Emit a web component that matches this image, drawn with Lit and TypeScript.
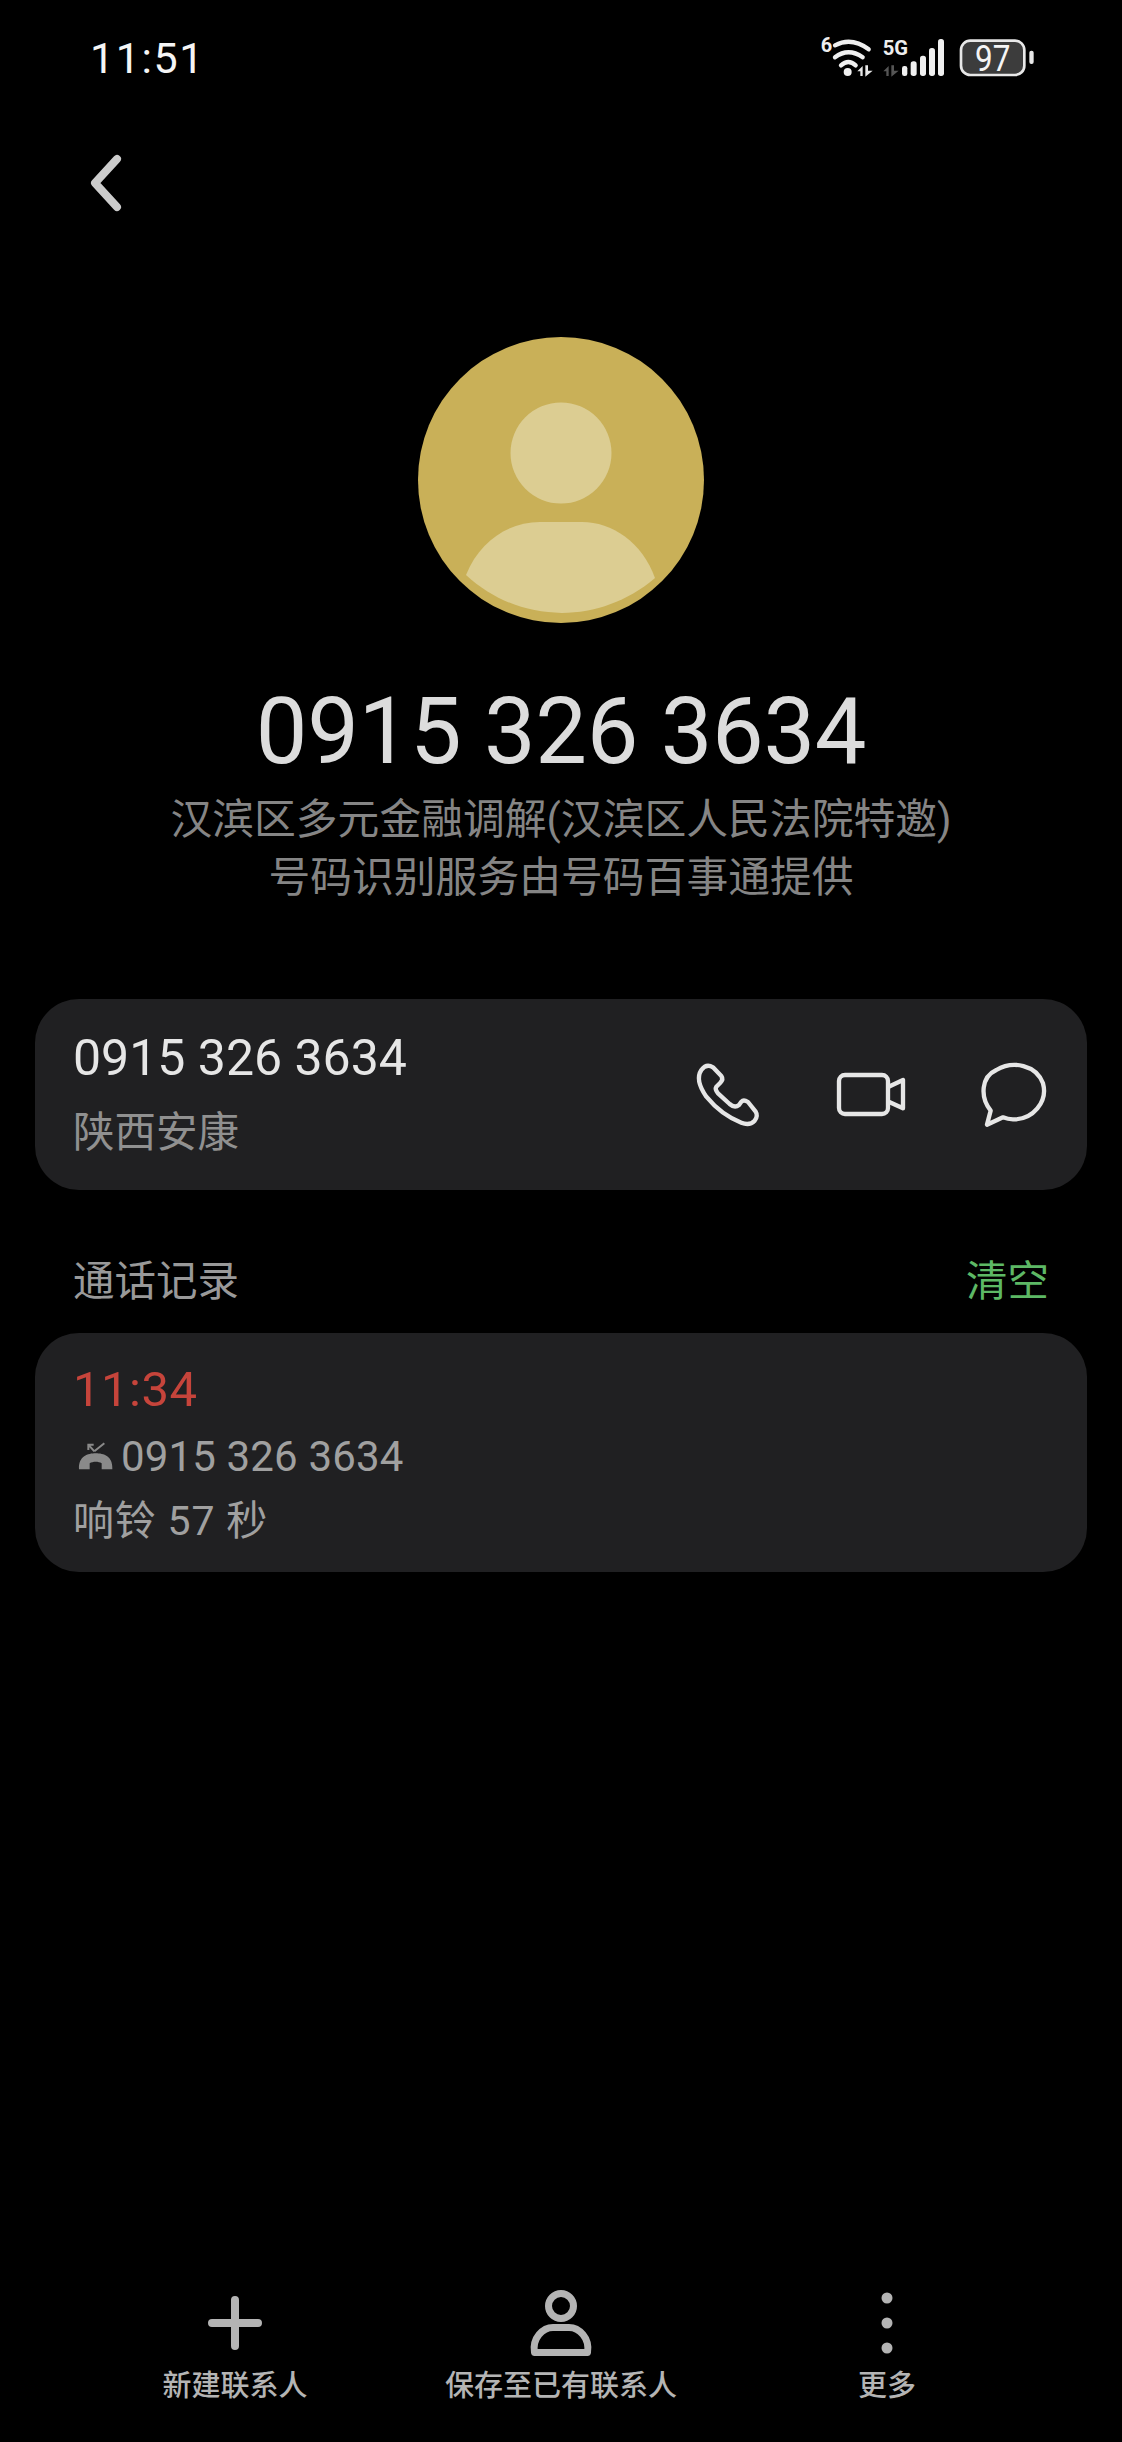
import {LitElement, html, css} from 'lit';
import {customElement} from 'lit/decorators.js';

const phoneIcon = html`<svg class="act" viewBox="85 45 240 240"><path d="M125 90Q140 70 160 82L185 108Q192 118 182 128L170 140Q165 148 175 160L210 192Q225 205 238 195L245 185Q252 178 265 186L288 215Q296 228 285 242Q270 258 245 248Q185 225 140 170Q105 120 125 90Z"/></svg>`;
const videoIcon = html`<svg class="act" viewBox="517 45 240 240"><rect x="541" y="105" width="147" height="117" rx="18"/><path d="M690 140L733 120V205L690 185"/></svg>`;
const chatIcon = html`<svg class="act" viewBox="943 45 240 240"><path d="M993 212C960 170 965 110 1010 90C1060 60 1130 75 1150 130C1165 185 1120 240 1060 238Q1045 238 1030 232L982 254Z"/></svg>`;

@customElement('app-root')
export class AppRoot extends LitElement {
  static override styles = css`
    * {
      box-sizing: border-box;
      margin: 0;
      padding: 0;
    }

    :host {
      display: block;
      width: 1122px;
      font-family: Roboto, "Noto Sans CJK SC", sans-serif;
    }

    svg {
      display: block;
      flex: none;
    }

    .page {
      width: 1122px;
      min-height: 2442px;
      background: #000;
      display: flex;
      flex-direction: column;
    }

    .status {
      height: 110px;
      padding: 0 62px 0 90px;
      display: flex;
      align-items: center;
      justify-content: space-between;
    }

    .time {
      font-size: 43px;
      line-height: 58px;
      letter-spacing: 1.6px;
      color: #f5f5f5;
      margin-top: 5px;
    }

    .back {
      margin: 43px 0 0 85px;
    }

    .avatar {
      margin: 124px auto 0;
    }

    .number {
      margin-top: 59px;
      text-align: center;
      font-size: 92px;
      line-height: 100px;
      letter-spacing: -0.3px;
      color: #dcdcdc;
    }

    .sub {
      margin-top: 9px;
      text-align: center;
      font-size: 41.8px;
      line-height: 58px;
      color: #858585;
    }

    .card {
      margin: 0 35px;
      background: #202022;
      border-radius: 44px;
    }

    .contact {
      margin-top: 92px;
      height: 191px;
      padding: 0 33px 0 38px;
      display: flex;
      align-items: center;
      justify-content: space-between;
    }

    .contact-num {
      font-size: 50px;
      line-height: 64px;
      color: #e6e6e6;
    }

    .contact-loc {
      margin-top: 13px;
      font-size: 41.5px;
      line-height: 60px;
      color: #909090;
    }

    .actions {
      display: flex;
      gap: 63px;
    }

    .act {
      width: 80px;
      height: 80px;
      fill: none;
      stroke: #e6e6e6;
      stroke-width: 13;
      stroke-linejoin: round;
      stroke-linecap: round;
    }

    .log-head {
      margin-top: 58px;
      padding: 0 73px;
      height: 60px;
      display: flex;
      align-items: center;
      justify-content: space-between;
      font-size: 41.5px;
      color: #999;
    }

    .clear {
      color: #5db865;
    }

    .log {
      margin-top: 25px;
      height: 239px;
      padding: 25px 38px 0;
    }

    .log-time {
      font-size: 49px;
      line-height: 64px;
      letter-spacing: 0.5px;
      color: #c6443b;
    }

    .log-num {
      display: flex;
      align-items: center;
      gap: 7px;
      padding-left: 5px;
      font-size: 42px;
      line-height: 70px;
      letter-spacing: 0.15px;
      color: #a0a0a0;
    }

    .log-ring {
      font-size: 41px;
      line-height: 58px;
      letter-spacing: 0.8px;
      color: #a0a0a0;
    }

    .tabs {
      margin-top: auto;
      padding: 0 72px 36px;
      display: grid;
      grid-template-columns: repeat(3, 326px);
    }

    .tab {
      display: flex;
      flex-direction: column;
      align-items: center;
      font-size: 29px;
      line-height: 40px;
      font-weight: 500;
      color: #b4b4b4;
    }

    .tab svg {
      margin-bottom: 10px;
    }
  `;

  override render() {
    return html`
      <div class="page">
        <div class="status">
          <div class="time">11:51</div>
          <svg width="280" height="70" viewBox="0 0 840 210">
            <text x="122" y="97" font-size="60" font-weight="700" fill="#eee" font-family="Roboto">6</text>
            <g fill="none" stroke="#f0f0f0" stroke-width="13" stroke-linecap="round">
              <path d="M165 76Q215 50 266 88"/>
              <path d="M165 112Q205 82 248 112"/>
              <path d="M183 136Q205 116 227 136"/>
            </g>
            <circle cx="203" cy="156" r="12" fill="#f0f0f0"/>
            <path d="M232 154L248 138V168H241V154ZM256 136H264V152L278 152L256 170Z" fill="#e8e8e8"/>
            <text x="308" y="104" font-size="62" font-weight="700" fill="#eee" font-family="Roboto" textLength="76" lengthAdjust="spacingAndGlyphs">5G</text>
            <path d="M310 154L326 138V168H319V154ZM334 136H342V152L356 152L334 170Z" fill="#555"/>
            <g fill="#f0f0f0">
              <rect x="366" y="138" width="16" height="30" rx="7"/>
              <rect x="392" y="124" width="18" height="44" rx="8"/>
              <rect x="420" y="107" width="18" height="61" rx="8"/>
              <rect x="447" y="84" width="18" height="84" rx="8"/>
              <rect x="474" y="57" width="18" height="111" rx="8"/>
            </g>
            <rect x="543" y="62" width="190" height="103" rx="28" fill="#3c3c3c" stroke="#e8e8e8" stroke-width="8"/>
            <rect x="748" y="92" width="13" height="40" rx="6" fill="#e8e8e8"/>
            <text x="585" y="153" font-size="108" fill="#f5f5f5" font-family="Roboto" textLength="106" lengthAdjust="spacingAndGlyphs">97</text>
          </svg>
        </div>

        <svg class="back" width="40" height="60" viewBox="85 153 40 60">
          <path d="M117 159L95 183L117 207" fill="none" stroke="#ccc" stroke-width="8" stroke-linecap="round" stroke-linejoin="round"/>
        </svg>

        <svg class="avatar" width="286" height="286" viewBox="418 337 286 286">
          <circle cx="561" cy="480" r="143" fill="#c9b058"/>
          <circle cx="561" cy="453" r="50.5" fill="#dccd92"/>
          <path d="M466 575C480 540 510 522 540 522H582C612 522 642 542 655 578C600 625 520 625 466 575Z" fill="#dccd92"/>
        </svg>

        <div class="number">0915 326 3634</div>
        <div class="sub">汉滨区多元金融调解(汉滨区人民法院特邀)<br />号码识别服务由号码百事通提供</div>

        <div class="card contact">
          <div>
            <div class="contact-num">0915 326 3634</div>
            <div class="contact-loc">陕西安康</div>
          </div>
          <div class="actions">${phoneIcon}${videoIcon}${chatIcon}</div>
        </div>

        <div class="log-head">
          <span>通话记录</span>
          <span class="clear">清空</span>
        </div>

        <div class="card log">
          <div class="log-time">11:34</div>
          <div class="log-num">
            <svg width="36" height="30" viewBox="145 608 108 90">
              <path d="M148 690C146 650 175 642 198 642C222 642 250 650 248 690H216V672C206 666 190 666 180 672V690Z" fill="#8a8a8a"/>
              <path d="M176 616L194 636M176 632V616H192M194 636L224 612" fill="none" stroke="#8a8a8a" stroke-width="6"/>
            </svg>
            <span>0915 326 3634</span>
          </div>
          <div class="log-ring">响铃 57 秒</div>
        </div>

        <div class="tabs">
          <div class="tab">
            <svg width="66" height="66" viewBox="0 0 66 66">
              <path d="M10 33H56M33 10V56" stroke="#b4b4b4" stroke-width="8" stroke-linecap="round"/>
            </svg>
            新建联系人
          </div>
          <div class="tab">
            <svg width="66" height="66" viewBox="0 0 66 66">
              <circle cx="33" cy="16" r="12.5" fill="none" stroke="#b4b4b4" stroke-width="7"/>
              <path d="M6.5 62.5C4 48 15 37.5 25 37.5H41C51 37.5 62 48 59.5 62.5Z" fill="none" stroke="#b4b4b4" stroke-width="7" stroke-linejoin="round"/>
            </svg>
            保存至已有联系人
          </div>
          <div class="tab">
            <svg width="66" height="66" viewBox="0 0 66 66">
              <circle cx="33" cy="8" r="5.5" fill="#b4b4b4"/>
              <circle cx="33" cy="33" r="5.5" fill="#b4b4b4"/>
              <circle cx="33" cy="58" r="5.5" fill="#b4b4b4"/>
            </svg>
            更多
          </div>
        </div>
      </div>
    `;
  }
}

declare global {
  interface HTMLElementTagNameMap {
    'app-root': AppRoot;
  }
}
